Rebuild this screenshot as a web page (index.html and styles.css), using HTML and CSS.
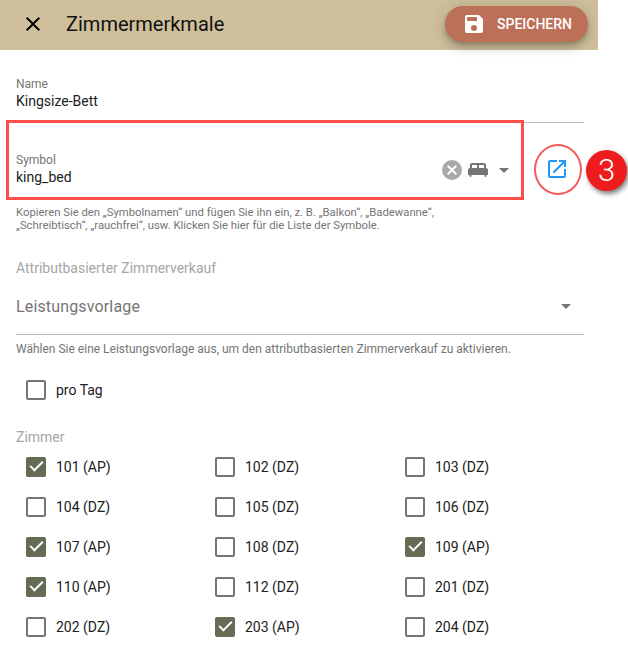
FILE: index.html
```html
<!DOCTYPE html>
<html lang="en">

<head>
    <meta charset="UTF-8">
    <meta name="viewport" content="width=device-width, initial-scale=1.0">
    <title>Zimmermerkmale</title>
    <link rel="stylesheet" href="styles.css">
</head>

<body>
<div class="dialog">
    <!-- Toolbar -->
    <header class="toolbar">
        <svg class="close-icon" viewBox="0 0 24 24" width="24" height="24"><path d="M19 6.41 17.59 5 12 10.59 6.41 5 5 6.41 10.59 12 5 17.59 6.41 19 12 13.41 17.59 19 19 17.59 13.41 12z"/></svg>
        <h1 class="title">Zimmermerkmale</h1>
        <button class="save-button">
            <svg viewBox="0 0 24 24" width="24" height="24"><path fill="#fff" d="M17 3H5a2 2 0 0 0-2 2v14a2 2 0 0 0 2 2h14a2 2 0 0 0 2-2V7l-4-4zm-5 16a3 3 0 1 1 0-6 3 3 0 0 1 0 6zm3-10H5V5h10v4z"/></svg>
            <span>SPEICHERN</span>
        </button>
    </header>

    <div class="form">
        <div class="field name-field">
            <div class="field-label">Name</div>
            <div class="field-value">Kingsize-Bett</div>
        </div>

        <div class="symbol-field">
            <div class="field-label">Symbol</div>
            <div class="symbol-row">
                <div class="field-value">king_bed</div>
                <div class="symbol-icons">
                    <svg viewBox="0 0 24 24" width="24" height="24"><path fill="#a9a9a9" d="M12 2a10 10 0 1 0 0 20 10 10 0 0 0 0-20zm5 13.59L15.59 17 12 13.41 8.41 17 7 15.59 10.59 12 7 8.41 8.41 7 12 10.59 15.59 7 17 8.41 13.41 12 17 15.59z"/></svg>
                    <svg class="bed-icon" viewBox="0 0 24 24" width="24" height="24"><path fill="#757575" d="M20 10V7c0-1.100-.9-2-2-2H6c-1.100 0-2 .9-2 2v3c-1.100 0-2 .9-2 2v5h1.330L4 19h1l.67-2h12.670l.66 2h1l.67-2H22v-5c0-1.100-.9-2-2-2zm-9 0H6V7h5v3zm7 0h-5V7h5v3z"/></svg>
                    <span class="arrow"></span>
                </div>
            </div>
        </div>
        <p class="hint symbol-hint">Kopieren Sie den „Symbolnamen“ und fügen Sie ihn ein, z. B. „Balkon“, „Badewanne“,<br>„Schreibtisch“, „rauchfrei“, usw. Klicken Sie hier für die Liste der Symbole.</p>

        <div class="section-label attr-label">Attributbasierter Zimmerverkauf</div>
        <div class="select-field">
            <span>Leistungsvorlage</span>
            <span class="arrow"></span>
        </div>
        <p class="hint select-hint">Wählen Sie eine Leistungsvorlage aus, um den attributbasierten Zimmerverkauf zu aktivieren.</p>

        <label class="check pro-tag"><span class="box"></span>pro Tag</label>

        <div class="section-label rooms-label">Zimmer</div>
        <div class="rooms">
            <label class="check"><span class="box checked"></span>101 (AP)</label>
            <label class="check"><span class="box"></span>102 (DZ)</label>
            <label class="check"><span class="box"></span>103 (DZ)</label>
            <label class="check"><span class="box"></span>104 (DZ)</label>
            <label class="check"><span class="box"></span>105 (DZ)</label>
            <label class="check"><span class="box"></span>106 (DZ)</label>
            <label class="check"><span class="box checked"></span>107 (AP)</label>
            <label class="check"><span class="box"></span>108 (DZ)</label>
            <label class="check"><span class="box checked"></span>109 (AP)</label>
            <label class="check"><span class="box checked"></span>110 (AP)</label>
            <label class="check"><span class="box"></span>112 (DZ)</label>
            <label class="check"><span class="box"></span>201 (DZ)</label>
            <label class="check"><span class="box"></span>202 (DZ)</label>
            <label class="check"><span class="box checked"></span>203 (AP)</label>
            <label class="check"><span class="box"></span>204 (DZ)</label>
        </div>
    </div>

    <!-- Annotations on top of the screenshot -->
    <div class="mark-box"></div>
    <div class="mark-circle">
        <svg viewBox="0 0 24 24" width="24" height="24"><path fill="#2196f3" d="M19 19H5V5h7V3H5a2 2 0 0 0-2 2v14a2 2 0 0 0 2 2h14a2 2 0 0 0 2-2v-7h-2v7zM14 3v2h3.590l-9.830 9.830 1.410 1.410L19 6.410V10h2V3h-7z"/></svg>
    </div>
    <div class="mark-badge">3</div>
</div>
</body>

</html>
```

FILE: styles.css
```css
/* Basic page */
body {
    margin: 0;
    font-family: Roboto, sans-serif;
    background: #fff;
    color: #212121;
}

.dialog {
    position: relative;
    width: 628px;
    height: 649px;
    overflow: hidden;
}

/* Toolbar */
.toolbar {
    display: flex;
    align-items: center;
    width: 598px;
    height: 50px;
    box-sizing: border-box;
    padding: 0 10px 2px 21px;
    background-color: #cfbf9b;
}

.close-icon {
    flex: none;
}

.title {
    flex: 1;
    margin: 0 0 0 21px;
    font-size: 20px;
    font-weight: 400;
    color: #111;
}

.save-button {
    display: flex;
    align-items: center;
    gap: 11px;
    width: 143px;
    height: 36px;
    box-sizing: border-box;
    padding: 0 0 0 17px;
    border: none;
    border-radius: 18px;
    background-color: #bc7058;
    color: #fff;
    font-family: Roboto, sans-serif;
    font-size: 14px;
    font-weight: 500;
    box-shadow: 0 3px 5px -1px rgba(0, 0, 0, .2), 0 6px 10px 0 rgba(0, 0, 0, .14), 0 1px 18px 0 rgba(0, 0, 0, .12);
}

/* Form */
.form {
    width: 568px;
    padding: 0 14px 0 16px;
}

.field-label {
    font-size: 12px;
    line-height: 14px;
    color: #757575;
}

.field-value {
    font-size: 14px;
    line-height: 18px;
    color: #212121;
}

.name-field {
    padding: 27px 0 12px;
    border-bottom: 1px solid #bdbdbd;
}

.name-field .field-value {
    padding-top: 1px;
}

.symbol-field {
    padding: 30px 75px 0 0;
}

.symbol-row {
    display: flex;
    align-items: center;
    height: 20px;
}

.symbol-row .field-value {
    flex: 1;
}

/* the icons sit higher than the text in this field */
.symbol-icons {
    display: flex;
    align-items: center;
    margin-bottom: 14px;
}

.bed-icon {
    margin-left: 2px;
}

.symbol-icons .arrow {
    margin-left: 9px;
}

.arrow {
    width: 0;
    height: 0;
    border-left: 5px solid transparent;
    border-right: 5px solid transparent;
    border-top: 5px solid #757575;
}

.hint {
    margin: 0;
    font-size: 12px;
    line-height: 13px;
    color: #757575;
}

.symbol-hint {
    margin-top: 19px;
    font-size: 11.3px;
}

.section-label {
    font-size: 14px;
    line-height: 16px;
    color: #a6a6a6;
}

.attr-label {
    margin-top: 28px;
}

.select-field {
    display: flex;
    align-items: center;
    justify-content: space-between;
    height: 59px;
    box-sizing: border-box;
    padding: 2px 13px 0 0;
    border-bottom: 1px solid #bdbdbd;
    font-size: 16px;
    letter-spacing: .15px;
    color: #757575;
}

.select-hint {
    margin-top: 8px;
}

.check {
    display: flex;
    align-items: center;
    gap: 10px;
    height: 40px;
    padding-left: 10px;
    font-size: 14px;
    color: #212121;
}

.box {
    position: relative;
    width: 20px;
    height: 20px;
    box-sizing: border-box;
    border: 2px solid #757575;
    border-radius: 2px;
}

.box.checked {
    border-color: #646c53;
    background-color: #646c53;
}

/* the tick */
.box.checked::after {
    content: "";
    position: absolute;
    left: 1.5px;
    top: 2px;
    width: 11px;
    height: 5px;
    border-left: 2px solid #fff;
    border-bottom: 2px solid #fff;
    transform: rotate(-45deg);
}

.pro-tag {
    margin-top: 14px;
}

.rooms-label {
    margin-top: 19px;
}

.rooms {
    display: grid;
    grid-template-columns: 189px 190px 190px;
    margin-top: 2px;
}

/* Annotations */
.mark-box {
    position: absolute;
    left: 6px;
    top: 120px;
    width: 512px;
    height: 74px;
    border: 3px solid #ff4c4c;
}

.mark-circle {
    position: absolute;
    left: 534px;
    top: 144px;
    width: 44px;
    height: 47px;
    border: 2px solid #f45a5a;
    border-radius: 50%;
    display: flex;
    align-items: center;
    justify-content: center;
}

.mark-circle svg {
    margin: 0 3px 2px 0;
}

.mark-badge {
    position: absolute;
    left: 586px;
    top: 150px;
    width: 41px;
    height: 41px;
    border-radius: 50%;
    background-color: #ee1c1c;
    color: #fff;
    font-size: 31px;
    font-weight: 300;
    line-height: 41px;
    text-align: center;
    box-shadow: 2px 3px 5px rgba(0, 0, 0, .5);
}
```
